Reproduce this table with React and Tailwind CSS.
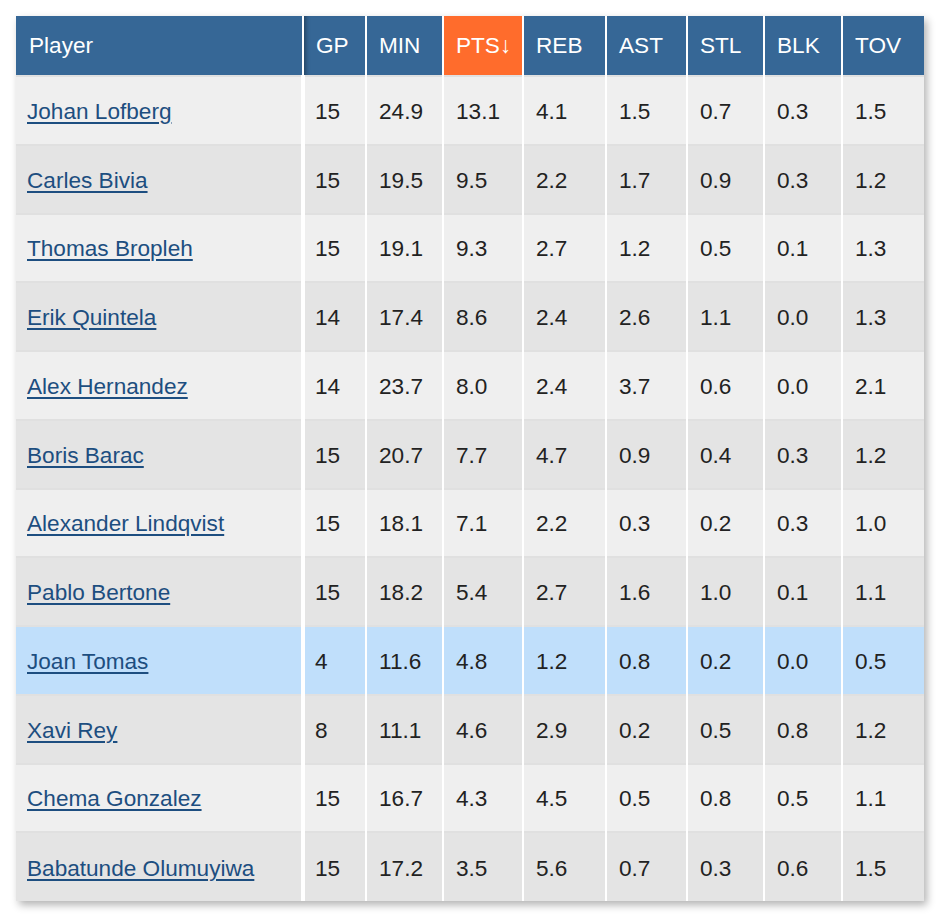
import React from "react";

const columns = [
  { key: "player", label: "Player", width: "w-[287px]" },
  { key: "gp", label: "GP", width: "w-[63px]" },
  { key: "min", label: "MIN", width: "w-[77px]" },
  { key: "pts", label: "PTS↓", width: "w-[80px]", sorted: true },
  { key: "reb", label: "REB", width: "w-[83px]" },
  { key: "ast", label: "AST", width: "w-[81px]" },
  { key: "stl", label: "STL", width: "w-[77px]" },
  { key: "blk", label: "BLK", width: "w-[78px]" },
  { key: "tov", label: "TOV", width: "w-[82px]" },
];

const players = [
  ["Johan Lofberg", "15", "24.9", "13.1", "4.1", "1.5", "0.7", "0.3", "1.5"],
  ["Carles Bivia", "15", "19.5", "9.5", "2.2", "1.7", "0.9", "0.3", "1.2"],
  ["Thomas Bropleh", "15", "19.1", "9.3", "2.7", "1.2", "0.5", "0.1", "1.3"],
  ["Erik Quintela", "14", "17.4", "8.6", "2.4", "2.6", "1.1", "0.0", "1.3"],
  ["Alex Hernandez", "14", "23.7", "8.0", "2.4", "3.7", "0.6", "0.0", "2.1"],
  ["Boris Barac", "15", "20.7", "7.7", "4.7", "0.9", "0.4", "0.3", "1.2"],
  ["Alexander Lindqvist", "15", "18.1", "7.1", "2.2", "0.3", "0.2", "0.3", "1.0"],
  ["Pablo Bertone", "15", "18.2", "5.4", "2.7", "1.6", "1.0", "0.1", "1.1"],
  ["Joan Tomas", "4", "11.6", "4.8", "1.2", "0.8", "0.2", "0.0", "0.5"],
  ["Xavi Rey", "8", "11.1", "4.6", "2.9", "0.2", "0.5", "0.8", "1.2"],
  ["Chema Gonzalez", "15", "16.7", "4.3", "4.5", "0.5", "0.8", "0.5", "1.1"],
  ["Babatunde Olumuyiwa", "15", "17.2", "3.5", "5.6", "0.7", "0.3", "0.6", "1.5"],
];

const highlighted = "Joan Tomas";

const App = () => {
  return (
    <div className="min-h-screen bg-white p-4 font-['Liberation_Sans',Arial,sans-serif]">
      <table className="table-fixed border-collapse shadow-[3px_4px_8px_rgba(0,0,0,0.3)]">
        <thead>
          <tr className="h-[60px]">
            {columns.map((col, i) => (
              <th
                key={col.key}
                className={`${col.width} text-left font-normal text-[22.6px] text-white align-middle border-b border-white ${
                  i === 0 ? "pl-[13px]" : "pl-[12px] border-l-[2px] border-l-white"
                } ${col.sorted ? "bg-[#ff6c2c]" : "bg-[#366796]"} ${
                  i === 1 ? "shadow-[inset_5px_0_4px_-3px_rgba(0,0,0,0.35)]" : ""
                }`}
              >
                {col.label}
              </th>
            ))}
          </tr>
        </thead>
        <tbody>
          {players.map((row, r) => {
            const isHighlight = row[0] === highlighted;
            const bg = isHighlight
              ? "bg-[#c0dffb]"
              : r % 2 === 0
              ? "bg-[#efefef]"
              : "bg-[#e4e4e4]";
            return (
              <tr key={row[0]} className={`h-[68.75px] ${bg} border-t-2 border-[#e0e0e0]`}>
                {row.map((cell, i) => (
                  <td
                    key={i}
                    className={`align-middle pt-[3px] text-[22.6px] ${
                      i === 0
                        ? "pl-[11px]"
                        : `border-l-white text-[#222222] ${i === 1 ? "border-l-[4px] pl-[10px]" : "border-l-[2px] pl-[12px]"}`
                    }`}
                  >
                    {i === 0 ? (
                      <a href="#" className="text-[#1d4e80] underline underline-offset-[3px] decoration-[1.5px]">
                        {cell}
                      </a>
                    ) : (
                      cell
                    )}
                  </td>
                ))}
              </tr>
            );
          })}
        </tbody>
      </table>
    </div>
  );
};

export default App;
